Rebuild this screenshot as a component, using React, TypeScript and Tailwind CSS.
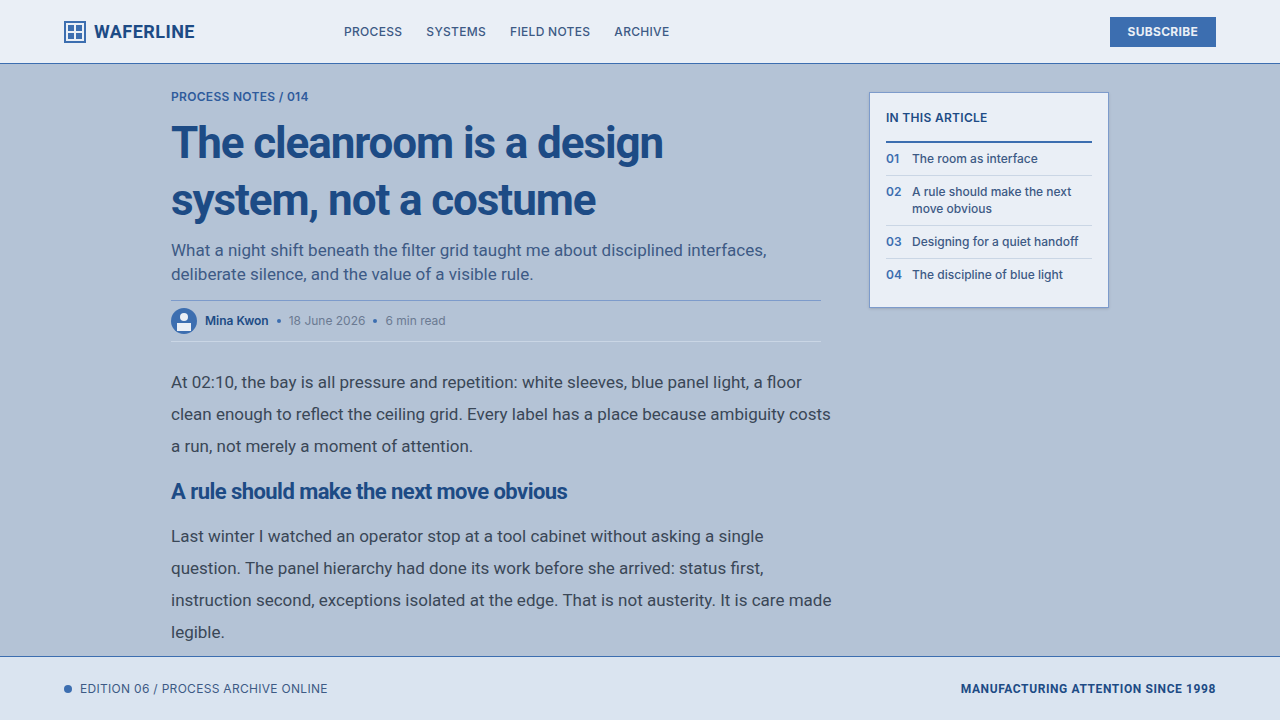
import React from "react";

const navLinks = ["Process", "Systems", "Field Notes", "Archive"];

const sections = [
  { id: "01", title: "The room as interface" },
  { id: "02", title: "A rule should make the next move obvious" },
  { id: "03", title: "Designing for a quiet handoff" },
  { id: "04", title: "The discipline of blue light" },
];

const Logo = () => (
  <svg width="22" height="22" viewBox="0 0 22 22" aria-hidden="true">
    <rect x="1" y="1" width="20" height="20" fill="none" stroke="#3c6eb0" strokeWidth="2" />
    <path d="M4 4h6v6H4zM12 4h6v6h-6zM4 12h6v6H4zM12 12h6v6h-6z" fill="#3c6eb0" />
  </svg>
);

const Avatar = () => (
  <svg width="26" height="26" viewBox="0 0 26 26" aria-hidden="true">
    <circle cx="13" cy="13" r="13" fill="#3c6eb0" />
    <circle cx="13" cy="9" r="4" fill="#eaeff6" />
    <rect x="6" y="15" width="14" height="8" fill="#eaeff6" />
  </svg>
);

const Dot = () => <span className="size-1 rounded-full bg-[#3c6eb0]" />;

const Header = () => (
  <header className="grid h-16 grid-cols-[280px_1fr_auto] items-center border-b border-[#3c6eb0] bg-[#eaeff6] px-16">
    <a href="#" className="flex items-center gap-2">
      <Logo />
      <span className="font-['Roboto'] text-lg font-bold tracking-wide text-[#1d4b85]">
        WAFERLINE
      </span>
    </a>
    <nav className="flex gap-6">
      {navLinks.map((link) => (
        <a
          key={link}
          href="#"
          className="text-xs font-medium tracking-wide uppercase text-[#3d5a85]"
        >
          {link}
        </a>
      ))}
    </nav>
    <button
      type="button"
      className="h-[30px] bg-[#3c6eb0] px-[18px] text-xs font-bold tracking-wide uppercase text-[#eaeff6]"
    >
      Subscribe
    </button>
  </header>
);

const Contents = () => (
  <aside className="self-start border border-[#7d9bcb] bg-[#eaeff6] p-4 shadow-sm">
    <h2 className="border-b-2 border-[#3c6eb0] pb-3.5 text-xs leading-[18px] font-semibold tracking-wide uppercase text-[#1d4b85]">
      In this article
    </h2>
    <ol>
      {sections.map((section) => (
        <li key={section.id} className="border-b border-[#cad6e5] last:border-b-0">
          <a
            href="#"
            className="grid grid-cols-[18px_1fr] gap-2 pt-[7px] pb-2 text-xs leading-[17px] font-medium text-[#3d5a85]"
          >
            <span className="font-semibold text-[#3c6eb0]">{section.id}</span>
            <span>{section.title}</span>
          </a>
        </li>
      ))}
    </ol>
  </aside>
);

const Article = () => (
  <article className="font-['Roboto']">
    <p className="font-['Inter'] text-xs leading-[10px] font-semibold tracking-wide uppercase text-[#2f5b9c]">
      Process Notes / 014
    </p>
    <h1 className="mt-[13px] text-[44px] leading-[57px] font-bold tracking-tight text-[#1d4b85]">
      The cleanroom is a design
      <br />
      system, not a costume
    </h1>
    <p className="mt-[9px] text-[17px] leading-6 text-[#3d5a85]">
      What a night shift beneath the filter grid taught me about disciplined
      interfaces, deliberate silence, and the value of a visible rule.
    </p>
    <div className="mt-3.5 flex h-[42px] items-center gap-2 border-t border-b border-t-[#7d9bcb] border-b-[#cad6e5] font-['Inter'] text-xs text-[#6b7a92]">
      <Avatar />
      <span className="font-semibold text-[#1d4b85]">Mina Kwon</span>
      <Dot />
      <time dateTime="2026-06-18">18 June 2026</time>
      <Dot />
      <span>6 min read</span>
    </div>
    {/* body copy hangs slightly into the gutter */}
    <p className="mt-6 -mr-3 text-[17px] leading-8 text-[#3a4757]">
      At 02:10, the bay is all pressure and repetition: white sleeves, blue
      panel light, a floor clean enough to reflect the ceiling grid. Every label
      has a place because ambiguity costs a run, not merely a moment of
      attention.
    </p>
    <h2 className="mt-4 text-[22px] leading-7 font-bold tracking-tight text-[#1d4b85]">
      A rule should make the next move obvious
    </h2>
    <p className="mt-3.5 -mr-3 text-[17px] leading-8 text-[#3a4757]">
      Last winter I watched an operator stop at a tool cabinet without asking a
      single question. The panel hierarchy had done its work before she arrived:
      status first, instruction second, exceptions isolated at the edge. That is
      not austerity. It is care made legible.
    </p>
  </article>
);

const Footer = () => (
  <footer className="flex h-16 items-center justify-between border-t border-[#3c6eb0] bg-[#dae4f0] px-16">
    <p className="flex items-center gap-2 text-xs tracking-wide uppercase text-[#3d5a85]">
      <span className="size-2 rounded-full bg-[#3c6eb0]" />
      Edition 06 / Process Archive Online
    </p>
    <p className="font-['Roboto'] text-xs font-bold tracking-wider uppercase text-[#1d4b85]">
      Manufacturing attention since 1998
    </p>
  </footer>
);

const App = () => {
  return (
    <div className="flex min-h-screen flex-col bg-[#b4c3d6] font-['Inter']">
      <Header />
      <main className="mx-auto grid w-full max-w-[938px] flex-1 grid-cols-[minmax(0,1fr)_240px] gap-12 pt-7">
        <Article />
        <Contents />
      </main>
      <Footer />
    </div>
  );
};

export default App;
